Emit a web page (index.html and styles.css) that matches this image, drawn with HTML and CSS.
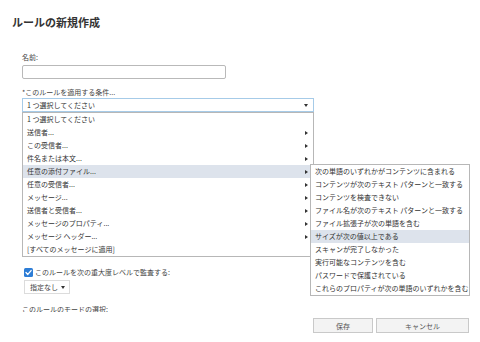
FILE: index.html
```html
<!DOCTYPE html>
<html lang="ja">
<head>
<meta charset="utf-8">
<title>ルールの新規作成</title>
<link rel="stylesheet" href="styles.css">
</head>
<body>
<div class="page">
  <div class="main">
    <h1 class="title">ルールの新規作成</h1>
    <div class="form">
      <div class="label">名前:</div>
      <div class="input"></div>
      <div class="label cond">*このルールを適用する条件...</div>
      <div class="select-wrap">
        <div class="select"><span>1 つ選択してください</span><span class="caret-down"></span></div>
        <div class="list">
          <div class="item"><span>1 つ選択してください</span></div>
          <div class="item"><span>送信者...</span><span class="arrow"></span></div>
          <div class="item"><span>この受信者...</span><span class="arrow"></span></div>
          <div class="item"><span>件名または本文...</span><span class="arrow"></span></div>
          <div class="item active"><span>任意の添付ファイル...</span><span class="arrow"></span></div>
          <div class="item"><span>任意の受信者...</span><span class="arrow"></span></div>
          <div class="item"><span>メッセージ...</span><span class="arrow"></span></div>
          <div class="item"><span>送信者と受信者...</span><span class="arrow"></span></div>
          <div class="item"><span>メッセージのプロパティ...</span><span class="arrow"></span></div>
          <div class="item"><span>メッセージ ヘッダー...</span><span class="arrow"></span></div>
          <div class="item"><span>[すべてのメッセージに適用]</span></div>
        </div>
        <div class="submenu">
          <div class="item">次の単語のいずれかがコンテンツに含まれる</div>
          <div class="item">コンテンツが次のテキスト パターンと一致する</div>
          <div class="item">コンテンツを検査できない</div>
          <div class="item">ファイル名が次のテキスト パターンと一致する</div>
          <div class="item">ファイル拡張子が次の単語を含む</div>
          <div class="item active">サイズが次の値以上である</div>
          <div class="item">スキャンが完了しなかった</div>
          <div class="item">実行可能なコンテンツを含む</div>
          <div class="item">パスワードで保護されている</div>
          <div class="item">これらのプロパティが次の単語のいずれかを含む</div>
        </div>
      </div>
      <div class="audit">
        <span class="checkbox"><svg viewBox="0 0 9 9" width="9" height="9"><path d="M2 4.6 L3.8 6.4 L7.1 2.6" fill="none" stroke="#fff" stroke-width="1.4" stroke-linecap="round" stroke-linejoin="round"/></svg></span>
        <span>このルールを次の重大度レベルで監査する:</span>
      </div>
      <div class="small-select"><span>指定なし</span><span class="caret-down"></span></div>
      <div class="label mode">このルールのモードの選択:</div>
    </div>
  </div>
  <div class="footer">
    <div class="btn save">保存</div>
    <div class="btn cancel">キャンセル</div>
  </div>
</div>
</body>
</html>
```

FILE: styles.css
```css
html, body {
  margin: 0;
  padding: 0;
}
body {
  width: 480px;
  height: 342px;
  overflow: hidden;
  background: #fff;
  font-family: "Noto Sans CJK JP", "Noto Sans", sans-serif;
  font-size: 7px;
  color: #333;
}
.page {
  height: 342px;
  display: flex;
  flex-direction: column;
}
.main {
  flex: 1;
  overflow: hidden;
  padding: 15px 0 0 12px;
}
.title {
  margin: 0;
  font-size: 11px;
  line-height: 14px;
  font-weight: bold;
  color: #333;
}
.form {
  margin-top: 23px;
  padding-left: 10px;
  display: flex;
  flex-direction: column;
  align-items: flex-start;
}
.label {
  line-height: 10px;
  color: #444;
}
.input {
  width: 204px;
  height: 14px;
  box-sizing: border-box;
  border: 1px solid #b9b9b9;
  border-radius: 2px;
  margin-top: 3px;
}
.label.cond {
  margin-top: 8px;
}
.select-wrap {
  position: relative;
  margin-top: 1px;
}
.select {
  width: 292px;
  height: 14px;
  box-sizing: border-box;
  border: 1px solid #a6cbe8;
  display: flex;
  align-items: center;
  justify-content: space-between;
  padding: 0 5px 0 4px;
}
.caret-down {
  width: 0;
  height: 0;
  border-left: 2.5px solid transparent;
  border-right: 2.5px solid transparent;
  border-top: 3px solid #333;
}
.arrow {
  width: 0;
  height: 0;
  border-top: 2.5px solid transparent;
  border-bottom: 2.5px solid transparent;
  border-left: 3px solid #333;
}
.list {
  position: absolute;
  top: 14px;
  left: 0;
  width: 292px;
  box-sizing: border-box;
  border: 1px solid #b7b7b7;
  background: #fff;
}
.item {
  height: 13px;
  line-height: 13px;
  padding: 0 5px 0 4px;
  display: flex;
  align-items: center;
  justify-content: space-between;
  white-space: nowrap;
}
.item.active {
  background: #dde3ec;
}
.submenu {
  position: absolute;
  top: 66px;
  left: 288px;
  width: 160px;
  box-sizing: border-box;
  border: 1px solid #b7b7b7;
  background: #fff;
}
.submenu .item {
  padding-left: 4px;
}
.audit {
  margin-top: 155px;
  padding-left: 2px;
  display: flex;
  align-items: center;
  gap: 2px;
  line-height: 10px;
  color: #444;
}
.checkbox {
  width: 9px;
  height: 9px;
  border-radius: 1.5px;
  background: #2d7dd6;
  display: flex;
}
.small-select {
  margin: 3px 0 0 2px;
  width: 46px;
  height: 14px;
  box-sizing: border-box;
  border: 1px solid #dcdcdc;
  display: flex;
  align-items: center;
  justify-content: space-between;
  padding: 0 4px 0 5px;
  color: #444;
}
.label.mode {
  margin-top: 10px;
}
.footer {
  height: 30px;
  box-sizing: border-box;
  padding: 6px 11px 0 0;
  display: flex;
  justify-content: flex-end;
  align-items: flex-start;
  gap: 3px;
  background: #fff;
}
.btn {
  height: 15px;
  box-sizing: border-box;
  border: 1px solid #c9c9c9;
  background: #f3f3f3;
  color: #555;
  display: flex;
  align-items: center;
  justify-content: center;
}
.btn.save {
  width: 60px;
}
.btn.cancel {
  width: 93px;
}
```
